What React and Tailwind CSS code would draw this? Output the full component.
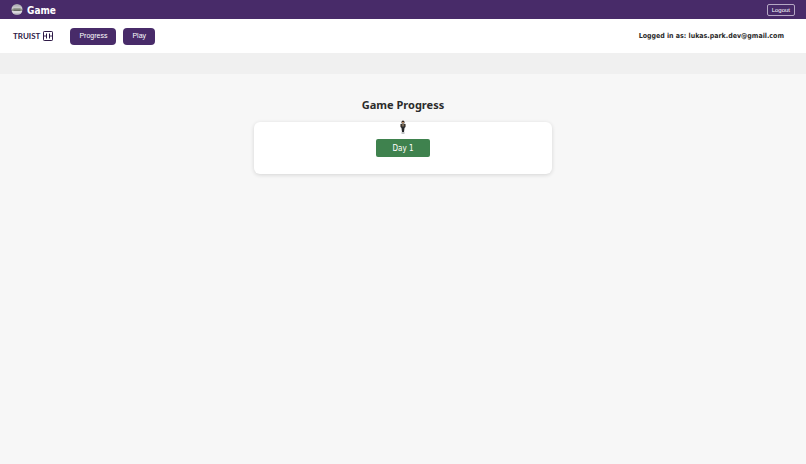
import { useState } from "react";

const GameBadge = () => {
  return (
    <svg viewBox="0 0 24 24" className="w-3 h-3 flex-none" aria-hidden="true">
      <defs>
        <clipPath id="badge">
          <circle cx="12" cy="11" r="11" />
        </clipPath>
        <linearGradient id="sky" x1="0" y1="0" x2="0" y2="1">
          <stop offset="0" stopColor="#a3a3aa" />
          <stop offset="1" stopColor="#dcdcdc" />
        </linearGradient>
      </defs>
      <g clipPath="url(#badge)">
        <rect width="24" height="11" fill="url(#sky)" />
        <path d="M0 11l6-3h12l6 3v3H0z" fill="#969a92" />
        <rect x="5" y="11" width="14" height="3" fill="#666b62" />
        <rect y="14" width="24" height="6" fill="#d9d8dc" />
        <rect y="19" width="24" height="5" fill="#aaa6b2" />
      </g>
    </svg>
  );
};

const TruistLogo = () => {
  return (
    <a href="#" aria-label="Truist" className="flex items-center gap-[3px] text-[#2e1a47]">
      <span className="font-['Lato',sans-serif] text-[8px] leading-3 font-bold">
        TRUIST
      </span>
      <svg
        viewBox="0 0 10 10"
        className="w-2.5 h-2.5"
        fill="none"
        stroke="currentColor"
        aria-hidden="true"
      >
        <rect x="0.5" y="0.5" width="9" height="9" rx="0.7" />
        <path d="M3.5 2.5v5M6.5 2.5v5" />
        <path d="M1 5h3M6 5h3" strokeWidth="0.9" />
      </svg>
    </a>
  );
};

const Player = () => {
  return (
    <svg viewBox="0 0 12 28" className="w-1.5 h-3.5" aria-hidden="true">
      <path d="M3 4q0-3 3-3t3 3v2H3z" fill="#30251f" />
      <rect x="4" y="4" width="4" height="3" fill="#b58a63" />
      <path d="M1 8l5-1 5 1v6l-2 2-1 8H4l-1-8-2-2z" fill="#27292c" />
      <path d="M5 8h2v5H5z" fill="#c9ae83" />
      <path d="M2 9v4M10 9v4" stroke="#8b6d49" />
      <path d="M3 25h6v2H3z" fill="#7d8085" />
    </svg>
  );
};

const NavButton = ({ label, active, onClick }) => {
  return (
    <button
      className="h-[17px] rounded-sm bg-[#482b69] px-[9px] font-['Liberation_Sans',Arial,sans-serif] text-[7px] leading-3 text-white"
      aria-current={active ? "page" : undefined}
      onClick={onClick}
    >
      {label}
    </button>
  );
};

const App = () => {
  const [page, setPage] = useState("Progress");

  return (
    <div className="min-h-screen bg-[#f7f7f7] font-['DejaVu_Sans_Condensed','DejaVu_Sans',sans-serif] text-[#2b2b2b]">
      <header className="flex h-[19px] items-center justify-between bg-[#482b69] px-[11px] text-white">
        <div className="flex items-center gap-1">
          <GameBadge />
          <h1 className="pt-0.5 text-[10px] leading-4 font-bold">Game</h1>
        </div>
        <button className="h-3 rounded-xs border border-[#b5a8c4] px-1 font-['Liberation_Sans',Arial,sans-serif] text-[6px] leading-[10px]">
          Logout
        </button>
      </header>

      <nav className="flex h-[34px] items-center justify-between bg-white pr-[22px] pl-[13px]">
        <div className="flex items-center gap-[17px]">
          <TruistLogo />
          <div className="flex gap-[7px]">
            {["Progress", "Play"].map((label) => (
              <NavButton
                key={label}
                label={label}
                active={page === label}
                onClick={() => setPage(label)}
              />
            ))}
          </div>
        </div>
        <p className="text-[7px] leading-3 font-bold">
          Logged in as: lukas.park.dev@gmail.com
        </p>
      </nav>
      <div className="h-[21px] bg-[#f0f0f0]" />

      <main className="flex flex-col items-center px-4 pt-[23px]">
        <h2 className="font-['Noto_Sans',sans-serif] text-[11px] leading-4 font-bold">
          Game Progress
        </h2>
        <section className="mt-[9px] flex h-[52px] w-full max-w-[298px] flex-col items-center rounded-md bg-white shadow-[0_1px_4px_rgba(0,0,0,0.14)]">
          <div className="-mt-0.5">
            <Player />
          </div>
          <button className="mt-[5px] h-[18px] w-[54px] rounded-xs bg-[#3f824e] pt-0.5 text-[8px] leading-4 text-white">
            Day 1
          </button>
        </section>
      </main>
    </div>
  );
};

export default App;
